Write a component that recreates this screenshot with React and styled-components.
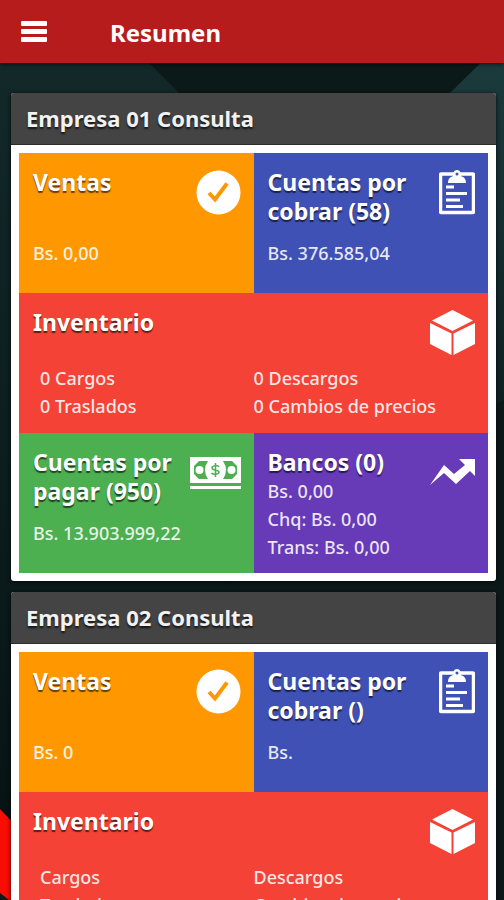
import React from "react";
import styled, { createGlobalStyle } from "styled-components";

const GlobalStyle = createGlobalStyle`
  * {
    box-sizing: border-box;
  }
  body {
    margin: 0;
    background: #0b1919;
    font-family: "Noto Sans", "Open Sans", sans-serif;
  }
`;

const Page = styled.div`
  position: relative;
  display: flex;
  flex-direction: column;
  height: 100vh;
  overflow: hidden;
`;

const Backdrop = styled.svg`
  position: absolute;
  inset: 0;
  width: 100%;
  height: 100%;
  z-index: -1;
`;

const Toolbar = styled.header`
  display: flex;
  align-items: center;
  gap: 60px;
  flex: none;
  height: 63px;
  padding: 2px 18px 0;
  background: #b71c1c;
  box-shadow: 0 1px 4px rgba(0, 0, 0, 0.7);
`;

const MenuButton = styled.button`
  display: flex;
  padding: 0;
  border: 0;
  background: none;
  color: #fff;
  cursor: pointer;
`;

const PageTitle = styled.h1`
  margin: 0;
  font-size: 24px;
  line-height: 29px;
  font-weight: 700;
  color: #fff;
`;

const CompanyList = styled.main`
  display: flex;
  flex-direction: column;
  gap: 11px;
  flex: 1;
  min-height: 0;
  padding: 30px 8px 11px 11px;
  overflow-y: auto;
  scrollbar-width: none;
`;

const Card = styled.section`
  flex: none;
  border-radius: 3px;
  overflow: hidden;
  background: #fff;
  box-shadow: 0 1px 4px rgba(0, 0, 0, 0.8);
`;

const CardTitle = styled.h2`
  margin: 0;
  padding: 0 15px;
  border-bottom: 1px solid #2c2c2c;
  background: #444;
  color: #f2f2f2;
  font-size: 22px;
  line-height: 51px;
  font-weight: 700;
  text-shadow: 0 2px 2px rgba(0, 0, 0, 0.7);
`;

const Tiles = styled.div`
  display: grid;
  grid-template-columns: 1fr 1fr;
  padding: 8px;
`;

const Tile = styled.article`
  grid-column: ${(props) => (props.$wide ? "span 2" : "auto")};
  min-height: 140px;
  padding: 15px 13px 0 14px;
  background: ${(props) => props.$color};
  color: #fff;
`;

const TileHead = styled.div`
  display: flex;
  justify-content: space-between;
  align-items: flex-start;
`;

const TileIcon = styled.svg`
  flex: none;
  height: 45px;
  width: ${(props) => props.$width || 45}px;
  margin-top: 2px;
`;

const TileTitle = styled.h3`
  margin: 0;
  min-height: ${(props) => (props.$tall ? 58 : 29)}px;
  font-size: 23px;
  line-height: 29px;
  font-weight: 700;
  text-shadow: 0 2px 1px rgba(0, 0, 0, 0.6);
`;

const Amount = styled.p`
  margin: ${(props) => (props.$spaced ? 13 : 0)}px 0 0;
  font-size: 18px;
  line-height: 28px;
  font-weight: 500;
  white-space: nowrap;
  color: rgba(255, 255, 255, 0.88);
`;

const Counts = styled.ul`
  display: grid;
  grid-template-columns: 1fr 1fr;
  margin: 9px -13px 0 -14px;
  padding: 0;
  list-style: none;
`;

const Count = styled.li`
  padding-left: ${(props) => (props.$indent ? 21 : 0)}px;
  font-size: 18px;
  line-height: 28px;
  font-weight: 500;
  white-space: nowrap;
  color: rgba(255, 255, 255, 0.88);
`;

const MenuIcon = () => (
  <svg width="32" height="24" viewBox="0 0 32 24" fill="currentColor">
    <rect x="3" y="0" width="26" height="5" rx="1" />
    <rect x="3" y="8" width="26" height="5" rx="1" />
    <rect x="3" y="16" width="26" height="5" rx="1" />
  </svg>
);

const CheckIcon = () => (
  <TileIcon viewBox="0 0 45 45">
    <circle cx="22.5" cy="22.5" r="22" fill="#fff" />
    <path d="M13 23l6 6.500L31 13.500" fill="none" stroke="#ff9800" strokeWidth="4" />
  </TileIcon>
);

const ClipboardIcon = () => (
  <TileIcon viewBox="0 0 36 45" $width={36}>
    <rect x="1.5" y="4" width="33" height="38.5" rx="1" fill="none" stroke="#fff" strokeWidth="3.5" />
    <path
      d="M9 13c0-5 3-6 5-7 0-3 1-6 4-6s4 3 4 6c2 1 5 2 5 7z"
      fill="#fff"
    />
    <circle cx="18" cy="4" r="1.5" fill="#3f51b5" />
    <path d="M7 17h8M7 23.500h21M7 30h14M7 36.500h17" stroke="#fff" strokeWidth="3" />
  </TileIcon>
);

const BoxIcon = () => (
  <TileIcon viewBox="0 0 45 45" fill="#fff">
    <path d="M22.500 0L43 10.500 22.500 21 2 10.500z" />
    <path d="M0 13l21.500 10.500V45L0 34z" />
    <path d="M45 13L23.500 23.500V45L45 34z" />
  </TileIcon>
);

const CashIcon = () => (
  <TileIcon viewBox="0 0 51 45" $width={51}>
    <path d="M0 7h51v26H0zM0 36h51v3H0z" fill="#fff" />
    <path d="M9 11h9q-6 9 0 18H9l-5-5v-8zM42 11h-9q6 9 0 18h9l5-5v-8z" fill="#4caf50" />
    <circle cx="9.5" cy="20" r="4" fill="#fff" />
    <circle cx="41.5" cy="20" r="4" fill="#fff" />
    <path
      d="M29 17c-1-2-7-2-7 1s7 1.500 7 4-6 3-7.500 1M25.500 13v14"
      fill="none"
      stroke="#4caf50"
      strokeWidth="1.500"
    />
  </TileIcon>
);

const TrendIcon = () => (
  <TileIcon viewBox="0 0 45 45">
    <path d="M0 35L14 15l10 9 11-9-6-6h16v17l-5-5-14 13-12-11z" fill="#fff" />
  </TileIcon>
);

const companies = [
  {
    name: "Empresa 01 Consulta",
    sales: "0,00",
    receivable: { count: "58", amount: "376.585,04" },
    inventory: ["0 Cargos", "0 Descargos", "0 Traslados", "0 Cambios de precios"],
    payable: { count: "950", amount: "13.903.999,22" },
    banks: { count: "0", amount: "0,00", checks: "0,00", transfers: "0,00" },
  },
  {
    name: "Empresa 02 Consulta",
    sales: "0",
    receivable: { count: "", amount: "" },
    inventory: ["Cargos", "Descargos", "Traslados", "Cambios de precios"],
    payable: { count: "", amount: "" },
    banks: { count: "", amount: "", checks: "", transfers: "" },
  },
];

const CompanyCard = ({ company }) => {
  const { name, sales, receivable, inventory, payable, banks } = company;

  return (
    <Card>
      <CardTitle>{name}</CardTitle>
      <Tiles>
        <Tile $color="#ff9800">
          <TileHead>
            <div>
              <TileTitle $tall>Ventas</TileTitle>
              <Amount $spaced>Bs. {sales}</Amount>
            </div>
            <CheckIcon />
          </TileHead>
        </Tile>
        <Tile $color="#3f51b5">
          <TileHead>
            <div>
              <TileTitle $tall>Cuentas por cobrar ({receivable.count})</TileTitle>
              <Amount $spaced>Bs. {receivable.amount}</Amount>
            </div>
            <ClipboardIcon />
          </TileHead>
        </Tile>
        <Tile $color="#f44336" $wide>
          <TileHead>
            <TileTitle>Inventario</TileTitle>
            <BoxIcon />
          </TileHead>
          <Counts>
            {inventory.map((item, i) => (
              <Count key={item} $indent={i % 2 === 0}>
                {item}
              </Count>
            ))}
          </Counts>
        </Tile>
        <Tile $color="#4caf50">
          <TileHead>
            <div>
              <TileTitle $tall>Cuentas por pagar ({payable.count})</TileTitle>
              <Amount $spaced>Bs. {payable.amount}</Amount>
            </div>
            <CashIcon />
          </TileHead>
        </Tile>
        <Tile $color="#673ab7">
          <TileHead>
            <div>
              <TileTitle>Bancos ({banks.count})</TileTitle>
              <Amount>Bs. {banks.amount}</Amount>
              <Amount>Chq: Bs. {banks.checks}</Amount>
              <Amount>Trans: Bs. {banks.transfers}</Amount>
            </div>
            <TrendIcon />
          </TileHead>
        </Tile>
      </Tiles>
    </Card>
  );
};

const App = () => (
  <>
    <GlobalStyle />
    <Page>
      <Backdrop viewBox="0 0 504 900" preserveAspectRatio="none">
        <defs>
          <linearGradient id="leftSlab" x1="0" y1="0" x2="0" y2="1">
            <stop offset="0" stopColor="#132a2b" />
            <stop offset="1" stopColor="#061213" />
          </linearGradient>
          <linearGradient id="rightSlab" x1="0" y1="0" x2="0" y2="1">
            <stop offset="0" stopColor="#1c3c3e" />
            <stop offset="1" stopColor="#0b1a1b" />
          </linearGradient>
        </defs>
        <rect width="504" height="900" fill="#0c1919" />
        <path d="M0 0H86L300 214V500L0 860z" fill="url(#leftSlab)" />
        <path d="M504 40L300 240V500L504 400z" fill="url(#rightSlab)" />
        <path d="M0 809L60 872V940L0 893z" fill="#f80d02" />
      </Backdrop>
      <Toolbar>
        <MenuButton aria-label="Menú">
          <MenuIcon />
        </MenuButton>
        <PageTitle>Resumen</PageTitle>
      </Toolbar>
      <CompanyList>
        {companies.map((company) => (
          <CompanyCard key={company.name} company={company} />
        ))}
      </CompanyList>
    </Page>
  </>
);

export default App;
